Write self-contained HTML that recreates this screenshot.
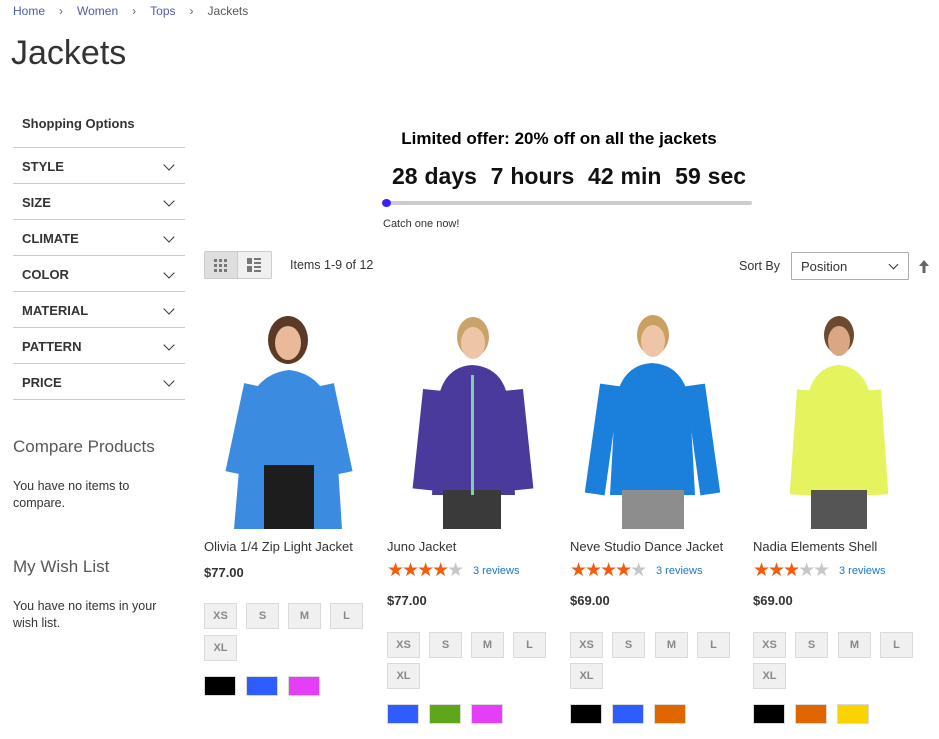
<!DOCTYPE html>
<html><head><meta charset="utf-8"><style>
*{box-sizing:border-box;margin:0;padding:0}
body{width:939px;height:739px;overflow:hidden;background:#fff;font-family:"Liberation Sans",sans-serif;color:#333;position:relative}
.a{position:absolute}
.bc{top:4px;left:13px;font-size:12px;color:#4d5ba6}
.bc span{color:#555}
.bc i{font-style:normal;color:#666;margin:0 14px}
h1{position:absolute;left:11px;top:34px;font-size:34px;font-weight:normal;color:#333}
.f{left:13px;width:172px;height:36px;border-top:1px solid #ccc;font-size:13px;font-weight:bold;padding:11px 9px;color:#333}
.f:after{content:"";position:absolute;right:12px;top:13px;width:7px;height:7px;border-right:1.5px solid #333;border-bottom:1.5px solid #333;transform:rotate(45deg)}
.sz{width:33px;height:26px;background:#f0f0f0;border:1px solid #dadada;font-size:11px;font-weight:bold;color:#888;text-align:center;line-height:24px}
.sw{width:32px;height:20px;border:1px solid #dadada}
.nm{font-size:13px;color:#333}
.pr{font-size:13px;font-weight:bold}
.st{font-size:19px;letter-spacing:-2px;color:#f45b0b;line-height:19px}
.st b{color:#c7c7c7;font-weight:normal}
.rv{font-size:11px;color:#1979c3}
</style></head><body>
<div class="a bc">Home<i>›</i>Women<i>›</i>Tops<i>›</i><span>Jackets</span></div>
<h1>Jackets</h1>
<div class="a" style="left:22px;top:116px;font-size:13px;font-weight:bold">Shopping Options</div>
<div class="a f" style="top:147px">STYLE</div>
<div class="a f" style="top:183px">SIZE</div>
<div class="a f" style="top:219px">CLIMATE</div>
<div class="a f" style="top:255px">COLOR</div>
<div class="a f" style="top:291px">MATERIAL</div>
<div class="a f" style="top:327px">PATTERN</div>
<div class="a f" style="top:363px">PRICE</div>
<div class="a" style="left:13px;top:399px;width:172px;border-top:1px solid #ccc"></div>
<div class="a" style="left:13px;top:437px;font-size:17px;font-weight:300;color:#575757">Compare Products</div>
<div class="a" style="left:13px;top:478px;font-size:12.5px;line-height:17px;width:140px">You have no items to compare.</div>
<div class="a" style="left:13px;top:557px;font-size:17px;font-weight:300;color:#575757">My Wish List</div>
<div class="a" style="left:13px;top:598px;font-size:12.5px;line-height:17px;width:160px">You have no items in your wish list.</div>

<div class="a" style="left:359px;width:400px;top:129px;text-align:center;font-size:17px;font-weight:bold;color:#000">Limited offer: 20% off on all the jackets</div>
<div class="a" style="left:392px;top:163px;font-size:23px;font-weight:bold;color:#111;word-spacing:0.5px">28 days&nbsp;&nbsp;7 hours&nbsp;&nbsp;42 min&nbsp;&nbsp;59 sec</div>
<div class="a" style="left:383px;top:201px;width:369px;height:4px;background:#ccc;border-radius:2px"></div>
<div class="a" style="left:382px;top:199px;width:9px;height:8px;background:#3c1fff;border-radius:50%"></div>
<div class="a" style="left:383px;top:218px;font-size:11px;color:#333">Catch one now!</div>

<div class="a" style="left:204px;top:251px;width:68px;height:28px;border:1px solid #ccc;border-radius:2px;background:#f0f0f0"></div>
<div class="a" style="left:204px;top:251px;width:34px;height:28px;background:#dedede;border:1px solid #ccc;border-radius:2px 0 0 2px"></div>
<svg class="a" style="left:214px;top:259px" width="15" height="13"><g fill="#777"><rect x="0" y="0" width="3" height="3"/><rect x="5" y="0" width="3" height="3"/><rect x="10" y="0" width="3" height="3"/><rect x="0" y="5" width="3" height="3"/><rect x="5" y="5" width="3" height="3"/><rect x="10" y="5" width="3" height="3"/><rect x="0" y="10" width="3" height="3"/><rect x="5" y="10" width="3" height="3"/><rect x="10" y="10" width="3" height="3"/></g></svg>
<svg class="a" style="left:247px;top:258px" width="15" height="14"><g fill="#777"><rect x="0" y="0" width="5" height="6"/><rect x="7" y="0" width="7" height="2"/><rect x="7" y="4" width="7" height="2"/><rect x="0" y="8" width="5" height="6"/><rect x="7" y="8" width="7" height="2"/><rect x="7" y="12" width="7" height="2"/></g></svg>
<div class="a" style="left:290px;top:258px;font-size:12.5px">Items 1-9 of 12</div>
<div class="a" style="left:739px;top:259px;font-size:12.5px">Sort By</div>
<div class="a" style="left:791px;top:252px;width:118px;height:28px;border:1px solid #adadad;border-radius:1px;font-size:13px;padding:6px 9px;background:#fff">Position</div>
<div class="a" style="left:890px;top:261px;width:7px;height:7px;border-right:1.5px solid #333;border-bottom:1.5px solid #333;transform:rotate(45deg)"></div>
<svg class="a" style="left:918px;top:260px" width="12" height="13"><path d="M6 0L11 6H7.5V13H4.5V6H1Z" fill="#666"/></svg>

<svg class="a" style="left:204px;top:305px" width="735" height="224">
<g>
<path d="M30 224 L38 130 Q42 70 85 65 Q128 70 132 130 L138 224Z" fill="#3b8be0"/>
<rect x="40" y="80" width="18" height="90" fill="#3b8be0" transform="rotate(12 49 80)"/>
<rect x="112" y="80" width="18" height="90" fill="#3b8be0" transform="rotate(-12 121 80)"/>
<rect x="60" y="160" width="50" height="64" fill="#1d1d1d"/>
<ellipse cx="84" cy="35" rx="20" ry="24" fill="#5a3a25"/><ellipse cx="84" cy="38" rx="13" ry="17" fill="#e9b99a"/>
</g>
<g transform="translate(183,0)">
<path d="M45 190 L50 100 Q55 62 85 60 Q118 62 122 100 L128 190Z" fill="#4a3a9c"/>
<rect x="56" y="185" width="58" height="39" fill="#3a3a3a"/>
<rect x="36" y="85" width="20" height="100" fill="#4a3a9c" transform="rotate(6 46 85)"/>
<rect x="116" y="85" width="20" height="100" fill="#4a3a9c" transform="rotate(-6 126 85)"/>
<rect x="84" y="70" width="3" height="120" fill="#7fd0b0"/>
<ellipse cx="86" cy="32" rx="16" ry="20" fill="#c9a46a"/><ellipse cx="86" cy="38" rx="12" ry="16" fill="#efc5a8"/>
</g>
<g transform="translate(366,0)">
<path d="M40 190 L45 100 Q50 60 82 58 Q115 60 120 100 L125 190Z" fill="#1a80dc"/>
<rect x="52" y="185" width="62" height="39" fill="#8d8d8d"/>
<rect x="30" y="80" width="20" height="110" fill="#1a80dc" transform="rotate(8 40 80)"/>
<rect x="115" y="80" width="20" height="110" fill="#1a80dc" transform="rotate(-8 125 80)"/>
<ellipse cx="83" cy="30" rx="16" ry="20" fill="#caa060"/><ellipse cx="83" cy="36" rx="12" ry="16" fill="#efc5a8"/>
</g>
<g transform="translate(549,0)">
<path d="M50 190 L53 100 Q58 62 86 60 Q114 62 119 100 L122 190Z" fill="#e4f35e"/>
<rect x="58" y="185" width="56" height="39" fill="#555"/>
<rect x="44" y="85" width="15" height="105" fill="#e4f35e" transform="rotate(4 51 85)"/>
<rect x="113" y="85" width="15" height="105" fill="#e4f35e" transform="rotate(-4 120 85)"/>
<ellipse cx="86" cy="30" rx="15" ry="19" fill="#6b4a30"/><ellipse cx="86" cy="36" rx="11" ry="15" fill="#d9a784"/>
</g>
</svg>

<div class="a nm" style="left:204px;top:539px">Olivia 1/4 Zip Light Jacket</div>
<div class="a pr" style="left:204px;top:565px">$77.00</div>
<div class="a sz" style="left:204px;top:603px">XS</div><div class="a sz" style="left:246px;top:603px">S</div><div class="a sz" style="left:288px;top:603px">M</div><div class="a sz" style="left:330px;top:603px">L</div><div class="a sz" style="left:204px;top:635px">XL</div>
<div class="a sw" style="left:204px;top:676px;background:#000"></div><div class="a sw" style="left:246px;top:676px;background:#2f5cff"></div><div class="a sw" style="left:288px;top:676px;background:#e43ef7"></div>

<div class="a nm" style="left:387px;top:539px">Juno Jacket</div>
<div class="a st" style="left:387px;top:561px">★★★★<b>★</b></div><div class="a rv" style="left:473px;top:565px">3 reviews</div>
<div class="a pr" style="left:387px;top:593px">$77.00</div>
<div class="a sz" style="left:387px;top:632px">XS</div><div class="a sz" style="left:429px;top:632px">S</div><div class="a sz" style="left:471px;top:632px">M</div><div class="a sz" style="left:513px;top:632px">L</div><div class="a sz" style="left:387px;top:663px">XL</div>
<div class="a sw" style="left:387px;top:704px;background:#2f5cff"></div><div class="a sw" style="left:429px;top:704px;background:#5ea61a"></div><div class="a sw" style="left:471px;top:704px;background:#e43ef7"></div>

<div class="a nm" style="left:570px;top:539px">Neve Studio Dance Jacket</div>
<div class="a st" style="left:570px;top:561px">★★★★<b>★</b></div><div class="a rv" style="left:656px;top:565px">3 reviews</div>
<div class="a pr" style="left:570px;top:593px">$69.00</div>
<div class="a sz" style="left:570px;top:632px">XS</div><div class="a sz" style="left:612px;top:632px">S</div><div class="a sz" style="left:655px;top:632px">M</div><div class="a sz" style="left:697px;top:632px">L</div><div class="a sz" style="left:570px;top:663px">XL</div>
<div class="a sw" style="left:570px;top:704px;background:#000"></div><div class="a sw" style="left:612px;top:704px;background:#2f5cff"></div><div class="a sw" style="left:654px;top:704px;background:#e06700"></div>

<div class="a nm" style="left:753px;top:539px">Nadia Elements Shell</div>
<div class="a st" style="left:753px;top:561px">★★★<b>★★</b></div><div class="a rv" style="left:839px;top:565px">3 reviews</div>
<div class="a pr" style="left:753px;top:593px">$69.00</div>
<div class="a sz" style="left:753px;top:632px">XS</div><div class="a sz" style="left:795px;top:632px">S</div><div class="a sz" style="left:838px;top:632px">M</div><div class="a sz" style="left:880px;top:632px">L</div><div class="a sz" style="left:753px;top:663px">XL</div>
<div class="a sw" style="left:753px;top:704px;background:#000"></div><div class="a sw" style="left:795px;top:704px;background:#e06700"></div><div class="a sw" style="left:837px;top:704px;background:#f9d400"></div>
</body></html>
